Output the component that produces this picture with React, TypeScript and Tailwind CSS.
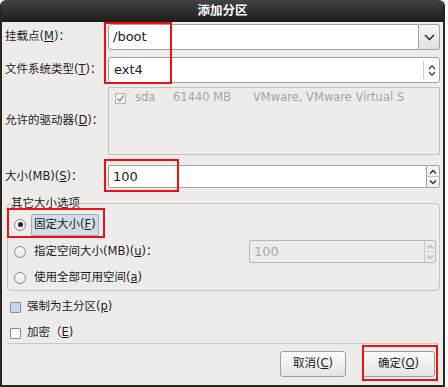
import React from 'react';

const font = { fontFamily: '"DejaVu Sans", "Noto Sans CJK SC", sans-serif' };

export default function App() {
  return (
    <div className="w-[448px] h-[387px] bg-white relative overflow-hidden" style={font}>
      <div className="w-[445px] h-[387px] flex flex-col bg-[#edeceb] border-x-2 border-b-2 border-[#262626] rounded-t-[6px] overflow-hidden text-[11.5px] text-[#1c1c1c]">
        {/* title bar */}
        <div className="h-[22px] shrink-0 flex items-center justify-center bg-gradient-to-b from-[#434343] to-[#1d1d1d] text-white font-bold text-[12.5px]">
          添加分区
        </div>

        <div className="flex flex-col pl-[3px] pr-[3px]">
          {/* mount point */}
          <div className="mt-[2px] h-[26px] flex items-center">
            <div className="w-[103px]">挂载点(<u>M</u>)：</div>
            <div className="flex-1 h-full flex">
              <div className="flex-1 bg-white border border-[#a3a3a3] rounded-l-[3px] flex items-center pl-[4px] text-[13px]">/boot</div>
              <div className="w-[21px] border border-l-0 border-[#a3a3a3] rounded-r-[3px] bg-gradient-to-b from-[#f6f6f6] to-[#e2e2e2] flex items-center justify-center">
                <ChevronDown />
              </div>
            </div>
          </div>

          {/* filesystem type */}
          <div className="mt-[7px] h-[26px] flex items-center">
            <div className="w-[103px]">文件系统类型(<u>T</u>)：</div>
            <div className="flex-1 h-full flex bg-white border border-[#a3a3a3] rounded-[3px]">
              <div className="flex-1 flex items-center pl-[5px] text-[13px]">ext4</div>
              <div className="w-[16px] my-[3px] border-l border-[#cfcfcf] flex items-center justify-center">
                <UpDown />
              </div>
            </div>
          </div>

          {/* allowed drives */}
          <div className="mt-[4px] h-[68px] flex items-center">
            <div className="w-[103px]">允许的驱动器(<u>D</u>)：</div>
            <div className="flex-1 h-full border border-[#c3c2c0] bg-[#edeceb] text-[#a4a4a4]">
              <div className="h-[20px] flex items-center">
                <div className="ml-[6px] w-[11px] h-[11px] border border-[#b5b5b5] bg-[#f2f2f2] flex items-center justify-center">
                  <svg width="9" height="9" viewBox="0 0 9 9"><path d="M1.5 4.5 L3.7 7 L7.5 1.5" fill="none" stroke="#9a9a9a" strokeWidth="1.5" /></svg>
                </div>
                <span className="ml-[9px] w-[38px]">sda</span>
                <span className="w-[80px]">61440 MB</span>
                <span>VMware, VMware Virtual S</span>
              </div>
            </div>
          </div>

          {/* size */}
          <div className="mt-[10px] h-[23px] flex items-center">
            <div className="w-[103px]">大小(MB)(<u>S</u>)：</div>
            <div className="flex-1 h-full flex">
              <div className="flex-1 bg-white border border-[#a3a3a3] rounded-l-[2px] flex items-center pl-[4px] text-[13px]">100</div>
              <div className="w-[13px] border border-l-0 border-[#a3a3a3] rounded-r-[2px] flex flex-col bg-[#f3f3f3]">
                <div className="flex-1 flex items-center justify-center border-b border-[#c8c8c8]"><Caret up /></div>
                <div className="flex-1 flex items-center justify-center"><Caret /></div>
              </div>
            </div>
          </div>

          {/* other size options */}
          <fieldset className="mt-[8px] ml-[2px] mr-0 h-[95px] border border-[#c5c4c2] rounded-[4px] px-[3px] pb-0">
            <legend className="px-0 leading-[14px]">其它大小选项</legend>
            <div className="h-[27px] flex items-center mt-[1px]">
              <Radio checked />
              <div className="ml-[5px] h-[22px] px-[2px] flex items-center bg-[#d3dbe6] border border-[#9eacbf] rounded-[2px]">固定大小(<u>F</u>)</div>
            </div>
            <div className="h-[27px] flex items-center">
              <Radio />
              <div className="ml-[8px] flex-1">指定空间大小(MB)(<u>u</u>)：</div>
              <div className="w-[187px] h-[23px] flex border border-[#b8b8b8] rounded-[2px] bg-[#edeceb] text-[#a8a8a8]">
                <div className="flex-1 flex items-center pl-[4px] text-[13px]">100</div>
                <div className="w-[11px] flex flex-col border-l border-[#c8c8c8]">
                  <div className="flex-1 flex items-center justify-center border-b border-[#d0d0d0]"><Caret up light /></div>
                  <div className="flex-1 flex items-center justify-center"><Caret light /></div>
                </div>
              </div>
            </div>
            <div className="h-[26px] flex items-center">
              <Radio />
              <div className="ml-[8px]">使用全部可用空间(<u>a</u>)</div>
            </div>
          </fieldset>

          {/* checkboxes */}
          <div className="mt-[6px] h-[20px] flex items-center pl-[5px]">
            <div className="w-[11px] h-[11px] border border-[#7e92ae] bg-[#c9d6e8] rounded-[1px]" />
            <div className="ml-[6px]">强制为主分区(<u>p</u>)</div>
          </div>
          <div className="mt-[6px] h-[20px] flex items-center pl-[5px]">
            <div className="w-[11px] h-[11px] border border-[#8a8a8a] bg-white rounded-[1px]" />
            <div className="ml-[6px]">加密（<u>E</u>)</div>
          </div>

          <div className="ml-[2px] mr-[2px] border-t border-[#c8c7c5]" />

          {/* buttons */}
          <div className="mt-[7px] flex justify-end pr-[5px] gap-[16px]">
            <button className="w-[66px] h-[26px] border border-[#9e9e9e] rounded-[3px] bg-gradient-to-b from-[#fbfbfb] to-[#e4e4e4]">取消(<u>C</u>)</button>
            <button className="w-[73px] h-[26px] border border-[#9e9e9e] rounded-[3px] bg-gradient-to-b from-[#fbfbfb] to-[#e4e4e4]">确定(<u>O</u>)</button>
          </div>
        </div>
      </div>

      {/* red annotation boxes */}
      <div className="absolute left-[104px] top-[22px] w-[68px] h-[62px] border-2 border-[#ee1111]" />
      <div className="absolute left-[104px] top-[159px] w-[75px] h-[33px] border-2 border-[#ee1111]" />
      <div className="absolute left-[7px] top-[208px] w-[98px] h-[30px] border-2 border-[#ee1111]" />
      <div className="absolute left-[362px] top-[345px] w-[76px] h-[36px] border-2 border-[#ee1111]" />
    </div>
  );
}

function ChevronDown() {
  return (
    <svg width="11" height="7" viewBox="0 0 11 7">
      <path d="M1 1 L5.5 5.5 L10 1" fill="none" stroke="#333" strokeWidth="1.6" />
    </svg>
  );
}

function UpDown() {
  return (
    <svg width="8" height="13" viewBox="0 0 8 13">
      <path d="M1 5 L4 2 L7 5" fill="none" stroke="#444" strokeWidth="1.3" />
      <path d="M1 8 L4 11 L7 8" fill="none" stroke="#444" strokeWidth="1.3" />
    </svg>
  );
}

function Caret({ up, light }: { up?: boolean; light?: boolean }) {
  return (
    <svg width="8" height="5" viewBox="0 0 8 5">
      <path d={up ? 'M1 4.5 L4 1.5 L7 4.5' : 'M1 0.5 L4 3.5 L7 0.5'} fill="none" stroke={light ? '#b5b5b5' : '#333'} strokeWidth="1.4" />
    </svg>
  );
}

function Radio({ checked }: { checked?: boolean }) {
  return (
    <div className="ml-[3px] w-[12px] h-[12px] rounded-full border border-[#8a8a8a] bg-gradient-to-b from-[#fafafa] to-[#e8e8e8] flex items-center justify-center shrink-0">
      {checked && <div className="w-[5px] h-[5px] rounded-full bg-[#222]" />}
    </div>
  );
}
